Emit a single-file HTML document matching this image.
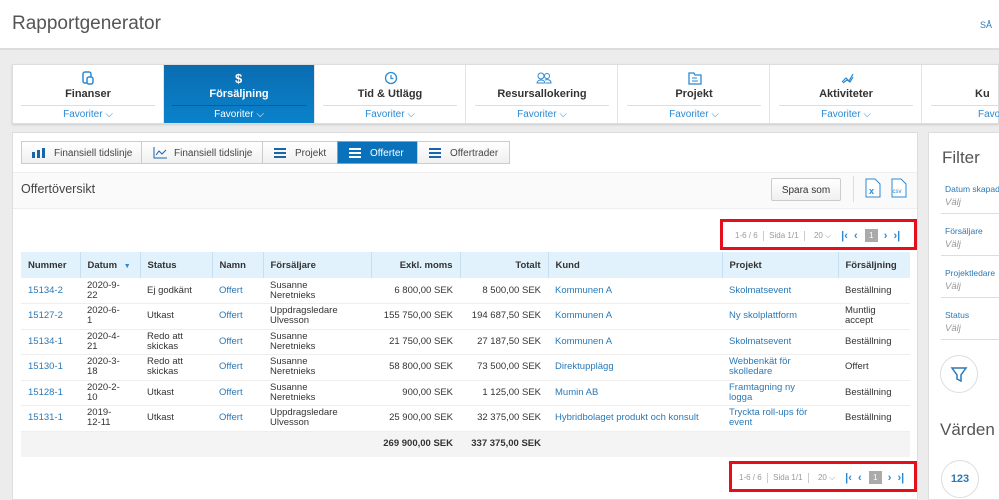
<!DOCTYPE html>
<html><head><meta charset="utf-8"><style>
*{box-sizing:border-box;margin:0;padding:0}
body{width:999px;height:500px;overflow:hidden;background:#ececec;font-family:"Liberation Sans",sans-serif;color:#333;position:relative;font-size:10px}
.a{position:absolute}
.hdr{left:0;top:0;width:999px;height:50px;background:#fff;border-bottom:2px solid #ddd}
.nav{left:12px;top:64px;width:987px;height:60px;background:#fff;border:1px solid #ddd;box-shadow:0 1px 2px #ccc}
.tab{position:absolute;top:0;height:58px;width:151px;border-right:1px solid #e4e4e4;text-align:center}
.tab .t{position:absolute;top:23px;left:0;right:0;font-size:11px;font-weight:bold;color:#333}
.tab .l{position:absolute;top:40px;left:8px;right:8px;border-top:1px solid #ddd}
.tab .f{position:absolute;top:44px;left:0;right:0;font-size:10px;color:#2a8ad4}
.tab svg{position:absolute;top:6px;left:69px}
.tab.on{background:linear-gradient(#0a6cb0,#0a82cc)}
.tab.on .t,.tab.on .f{color:#fff}.tab.on .l{border-color:#0b5d96}
.main{left:12px;top:132px;width:906px;height:368px;background:#fff;border:1px solid #ddd}
.btn{position:absolute;top:141px;height:23px;border:1px solid #ccc;background:linear-gradient(#fff,#f0f0f0);font-size:10px;color:#444;padding:6px 0 0 0}
.btn.on{background:#0a72bb;color:#fff;border-color:#5aaee0}
.ic{position:absolute;left:11px;top:6px;width:12px;height:10px;border-top:2px solid #1a64a8;border-bottom:2px solid #1a64a8}
.ic:after{content:"";position:absolute;left:0;right:0;top:2px;border-top:2px solid #1a64a8}
.on .ic,.on .ic:after{border-color:#fff}
table{position:absolute;left:21px;top:252px;width:889px;border-collapse:collapse;font-size:9.5px}
th{background:#e2f2fc;height:26px;text-align:left;font-weight:bold;padding:0 7px;color:#333;position:relative}
th+th{border-left:1px solid #c5e0f2}
td{height:25.5px;padding:0 7px;line-height:10px;border-bottom:1px solid #eee;vertical-align:middle}
.r{text-align:right}.b{color:#2a79b8}
tr.tot td{background:#f4f4f4;font-weight:bold;border:none}
.pg{border:3px solid #e3101c;height:31px;font-size:8px;color:#999;padding:7px 0 0 12px;white-space:nowrap}
.pg span{display:inline-block;vertical-align:middle}
.pg .n{color:#2a8ad4;font-weight:bold;font-size:11px}
.flt{left:928px;top:132px;width:80px;height:368px;background:#fff;border:1px solid #ddd}
.lbl{font-size:8.5px;color:#2a79b8;left:945px;white-space:nowrap}
.val{font-size:9.5px;color:#999;font-style:italic;left:945px}
.ln{left:941px;width:60px;border-top:1px solid #ddd}
</style></head><body>
<div class="a hdr"></div>
<div class="a" style="left:12px;top:13px;font-size:19px;color:#555">Rapportgenerator</div>
<div class="a" style="left:980px;top:20px;font-size:9px;color:#2a79b8">SÅ</div>

<div class="a nav">
<div class="tab" style="left:0"><svg width="12" height="14"><rect x="1" y="1" width="8" height="11" rx="2" fill="none" stroke="#2a8ad4" stroke-width="1.5"/><rect x="5" y="6" width="6" height="7" rx="2" fill="#fff" stroke="#2a8ad4" stroke-width="1.5"/></svg><div class="t">Finanser</div><div class="l"></div><div class="f">Favoriter ⌵</div></div>
<div class="tab on" style="left:151px;width:151px"><svg width="12" height="14"><text x="2" y="12" fill="#fff" font-size="13" font-weight="bold" font-family="Liberation Sans">$</text></svg><div class="t">Försäljning</div><div class="l"></div><div class="f">Favoriter ⌵</div></div>
<div class="tab" style="left:302px"><svg width="14" height="14"><circle cx="7" cy="7" r="5.5" fill="none" stroke="#2a8ad4" stroke-width="1.3"/><path d="M7 4v3.5h2.5" fill="none" stroke="#2a8ad4" stroke-width="1.2"/></svg><div class="t">Tid &amp; Utlägg</div><div class="l"></div><div class="f">Favoriter ⌵</div></div>
<div class="tab" style="left:454px"><svg width="16" height="14"><circle cx="5" cy="5" r="3" fill="none" stroke="#2a8ad4"/><path d="M1 12c0-4 8-4 8 0z" fill="none" stroke="#2a8ad4"/><circle cx="11" cy="5" r="2.5" fill="none" stroke="#2a8ad4"/><path d="M9 9c3-1 6 0 6 3h-5" fill="none" stroke="#2a8ad4"/></svg><div class="t">Resursallokering</div><div class="l"></div><div class="f">Favoriter ⌵</div></div>
<div class="tab" style="left:606px"><svg width="14" height="14"><path d="M1 2h5l1 2h6v9H1z" fill="none" stroke="#2a8ad4" stroke-width="1.3"/><path d="M4 7h5M4 10h6" stroke="#2a8ad4"/></svg><div class="t">Projekt</div><div class="l"></div><div class="f">Favoriter ⌵</div></div>
<div class="tab" style="left:758px"><svg width="14" height="14"><path d="M2 11l4-4 3 3 4-7M3 12l4-3 3 2 3-5" fill="none" stroke="#2a8ad4" stroke-width="1.2"/></svg><div class="t">Aktiviteter</div><div class="l"></div><div class="f">Favoriter ⌵</div></div>
<div class="tab" style="left:910px"><div class="t" style="left:52px;text-align:left">Ku</div><div class="l"></div><div class="f" style="left:55px;text-align:left">Favo</div></div>
</div>

<div class="a main"></div>
<div class="btn" style="left:21px;width:121px;padding-left:32px"><svg class="a" style="left:10px;top:6px" width="13" height="10"><rect x="0" y="4" width="3" height="6" fill="#1a64a8"/><rect x="5" y="2" width="3" height="8" fill="#1a64a8"/><rect x="10" y="0" width="3" height="10" fill="#1a64a8"/></svg>Finansiell tidslinje</div>
<div class="btn" style="left:141px;width:122px;padding-left:32px"><svg class="a" style="left:11px;top:5px" width="14" height="12"><path d="M1 0v11h13M3 8l3-4 3 3 4-4" fill="none" stroke="#1a64a8"/></svg>Finansiell tidslinje</div>
<div class="btn" style="left:262px;width:76px;padding-left:32px"><div class="ic"></div>Projekt</div>
<div class="btn on" style="left:337px;width:81px;padding-left:32px"><div class="ic"></div>Offerter</div>
<div class="btn" style="left:417px;width:93px;padding-left:32px"><div class="ic"></div>Offertrader</div>

<div class="a" style="left:13px;top:172px;width:904px;height:37px;background:#fafafa;border-top:1px solid #eee;border-bottom:1px solid #eee"></div>
<div class="a" style="left:21px;top:182px;font-size:12.5px;color:#444">Offertöversikt</div>
<div class="a" style="left:771px;top:178px;width:70px;height:23px;border:1px solid #ccc;border-radius:2px;background:linear-gradient(#fff,#f0f0f0);font-size:10px;text-align:center;padding-top:6px">Spara som</div>
<div class="a" style="left:853px;top:176px;height:26px;border-left:1px solid #ddd"></div>
<svg class="a" style="left:865px;top:178px" width="16" height="20"><path d="M1 1h9l5 5v13H1z" fill="#fff" stroke="#2a8ad4"/><text x="4" y="16" font-size="9" font-weight="bold" fill="#2a8ad4" font-family="Liberation Sans">x</text></svg>
<svg class="a" style="left:891px;top:178px" width="16" height="20"><path d="M1 1h9l5 5v13H1z" fill="#fff" stroke="#2a8ad4"/><text x="1.5" y="15" font-size="6" fill="#2a8ad4" font-family="Liberation Sans">csv</text></svg>

<div class="a pg" style="left:720px;top:219px;width:197px"><span>1-6 / 6</span> <span style="border-left:1px solid #ccc;height:10px;margin:0 3px"></span> <span>Sida 1/1</span> <span style="border-left:1px solid #ccc;height:10px;margin:0 3px"></span> <span style="margin-left:4px">20 ⌵</span><span class="n" style="margin-left:10px">|‹ &nbsp;‹</span><span style="background:#aaa;color:#fff;width:13px;height:13px;text-align:center;margin-left:7px;padding-top:2px">1</span><span class="n" style="margin-left:6px">› &nbsp;›|</span></div>

<table>
<tr><th style="width:59px">Nummer</th><th style="width:60px">Datum <span style="color:#2a8ad4;font-size:7px;margin-left:4px">▼</span></th><th style="width:72px">Status</th><th style="width:51px">Namn</th><th style="width:108px">Försäljare</th><th class="r" style="width:89px">Exkl. moms</th><th class="r" style="width:88px">Totalt</th><th style="width:174px">Kund</th><th style="width:116px">Projekt</th><th>Försäljning</th></tr>
<tr><td class="b">15134-2</td><td>2020-9-<br>22</td><td>Ej godkänt</td><td class="b">Offert</td><td>Susanne<br>Neretnieks</td><td class="r">6 800,00 SEK</td><td class="r">8 500,00 SEK</td><td class="b">Kommunen A</td><td class="b">Skolmatsevent</td><td>Beställning</td></tr>
<tr><td class="b">15127-2</td><td>2020-6-<br>1</td><td>Utkast</td><td class="b">Offert</td><td>Uppdragsledare<br>Ulvesson</td><td class="r">155 750,00 SEK</td><td class="r">194 687,50 SEK</td><td class="b">Kommunen A</td><td class="b">Ny skolplattform</td><td>Muntlig<br>accept</td></tr>
<tr><td class="b">15134-1</td><td>2020-4-<br>21</td><td>Redo att<br>skickas</td><td class="b">Offert</td><td>Susanne<br>Neretnieks</td><td class="r">21 750,00 SEK</td><td class="r">27 187,50 SEK</td><td class="b">Kommunen A</td><td class="b">Skolmatsevent</td><td>Beställning</td></tr>
<tr><td class="b">15130-1</td><td>2020-3-<br>18</td><td>Redo att<br>skickas</td><td class="b">Offert</td><td>Susanne<br>Neretnieks</td><td class="r">58 800,00 SEK</td><td class="r">73 500,00 SEK</td><td class="b">Direktupplägg</td><td class="b">Webbenkät för<br>skolledare</td><td>Offert</td></tr>
<tr><td class="b">15128-1</td><td>2020-2-<br>10</td><td>Utkast</td><td class="b">Offert</td><td>Susanne<br>Neretnieks</td><td class="r">900,00 SEK</td><td class="r">1 125,00 SEK</td><td class="b">Mumin AB</td><td class="b">Framtagning ny<br>logga</td><td>Beställning</td></tr>
<tr><td class="b">15131-1</td><td>2019-<br>12-11</td><td>Utkast</td><td class="b">Offert</td><td>Uppdragsledare<br>Ulvesson</td><td class="r">25 900,00 SEK</td><td class="r">32 375,00 SEK</td><td class="b">Hybridbolaget produkt och konsult</td><td class="b">Tryckta roll-ups för<br>event</td><td>Beställning</td></tr>
<tr class="tot"><td></td><td></td><td></td><td></td><td></td><td class="r">269 900,00 SEK</td><td class="r">337 375,00 SEK</td><td></td><td></td><td></td></tr>
</table>

<div class="a pg" style="left:729px;top:461px;width:188px;padding-left:7px"><span>1-6 / 6</span> <span style="border-left:1px solid #ccc;height:10px;margin:0 3px"></span> <span>Sida 1/1</span> <span style="border-left:1px solid #ccc;height:10px;margin:0 3px"></span> <span style="margin-left:4px">20 ⌵</span><span class="n" style="margin-left:10px">|‹ &nbsp;‹</span><span style="background:#aaa;color:#fff;width:13px;height:13px;text-align:center;margin-left:7px;padding-top:2px">1</span><span class="n" style="margin-left:6px">› &nbsp;›|</span></div>

<div class="a flt"></div>
<div class="a" style="left:942px;top:148px;font-size:17px;color:#555">Filter</div>
<div class="a lbl" style="top:184px">Datum skapad</div><div class="a val" style="top:197px">Välj</div><div class="a ln" style="top:213px"></div>
<div class="a lbl" style="top:226px">Försäljare</div><div class="a val" style="top:239px">Välj</div><div class="a ln" style="top:255px"></div>
<div class="a lbl" style="top:268px">Projektledare</div><div class="a val" style="top:281px">Välj</div><div class="a ln" style="top:297px"></div>
<div class="a lbl" style="top:310px">Status</div><div class="a val" style="top:323px">Välj</div><div class="a ln" style="top:339px"></div>
<div class="a" style="left:940px;top:355px;width:38px;height:38px;border:1px solid #ddd;border-radius:50%"></div>
<svg class="a" style="left:950px;top:366px" width="18" height="18"><path d="M2 2h14l-5 7v6l-4-2V9z" fill="none" stroke="#2a79b8" stroke-width="1.5"/></svg>
<div class="a" style="left:940px;top:420px;font-size:17px;color:#555">Värden</div>
<div class="a" style="left:941px;top:460px;width:38px;height:38px;border:1px solid #ddd;border-radius:50%;text-align:center;padding-top:12px;font-size:11px;font-weight:bold;color:#2a79b8">123</div>
</body></html>
